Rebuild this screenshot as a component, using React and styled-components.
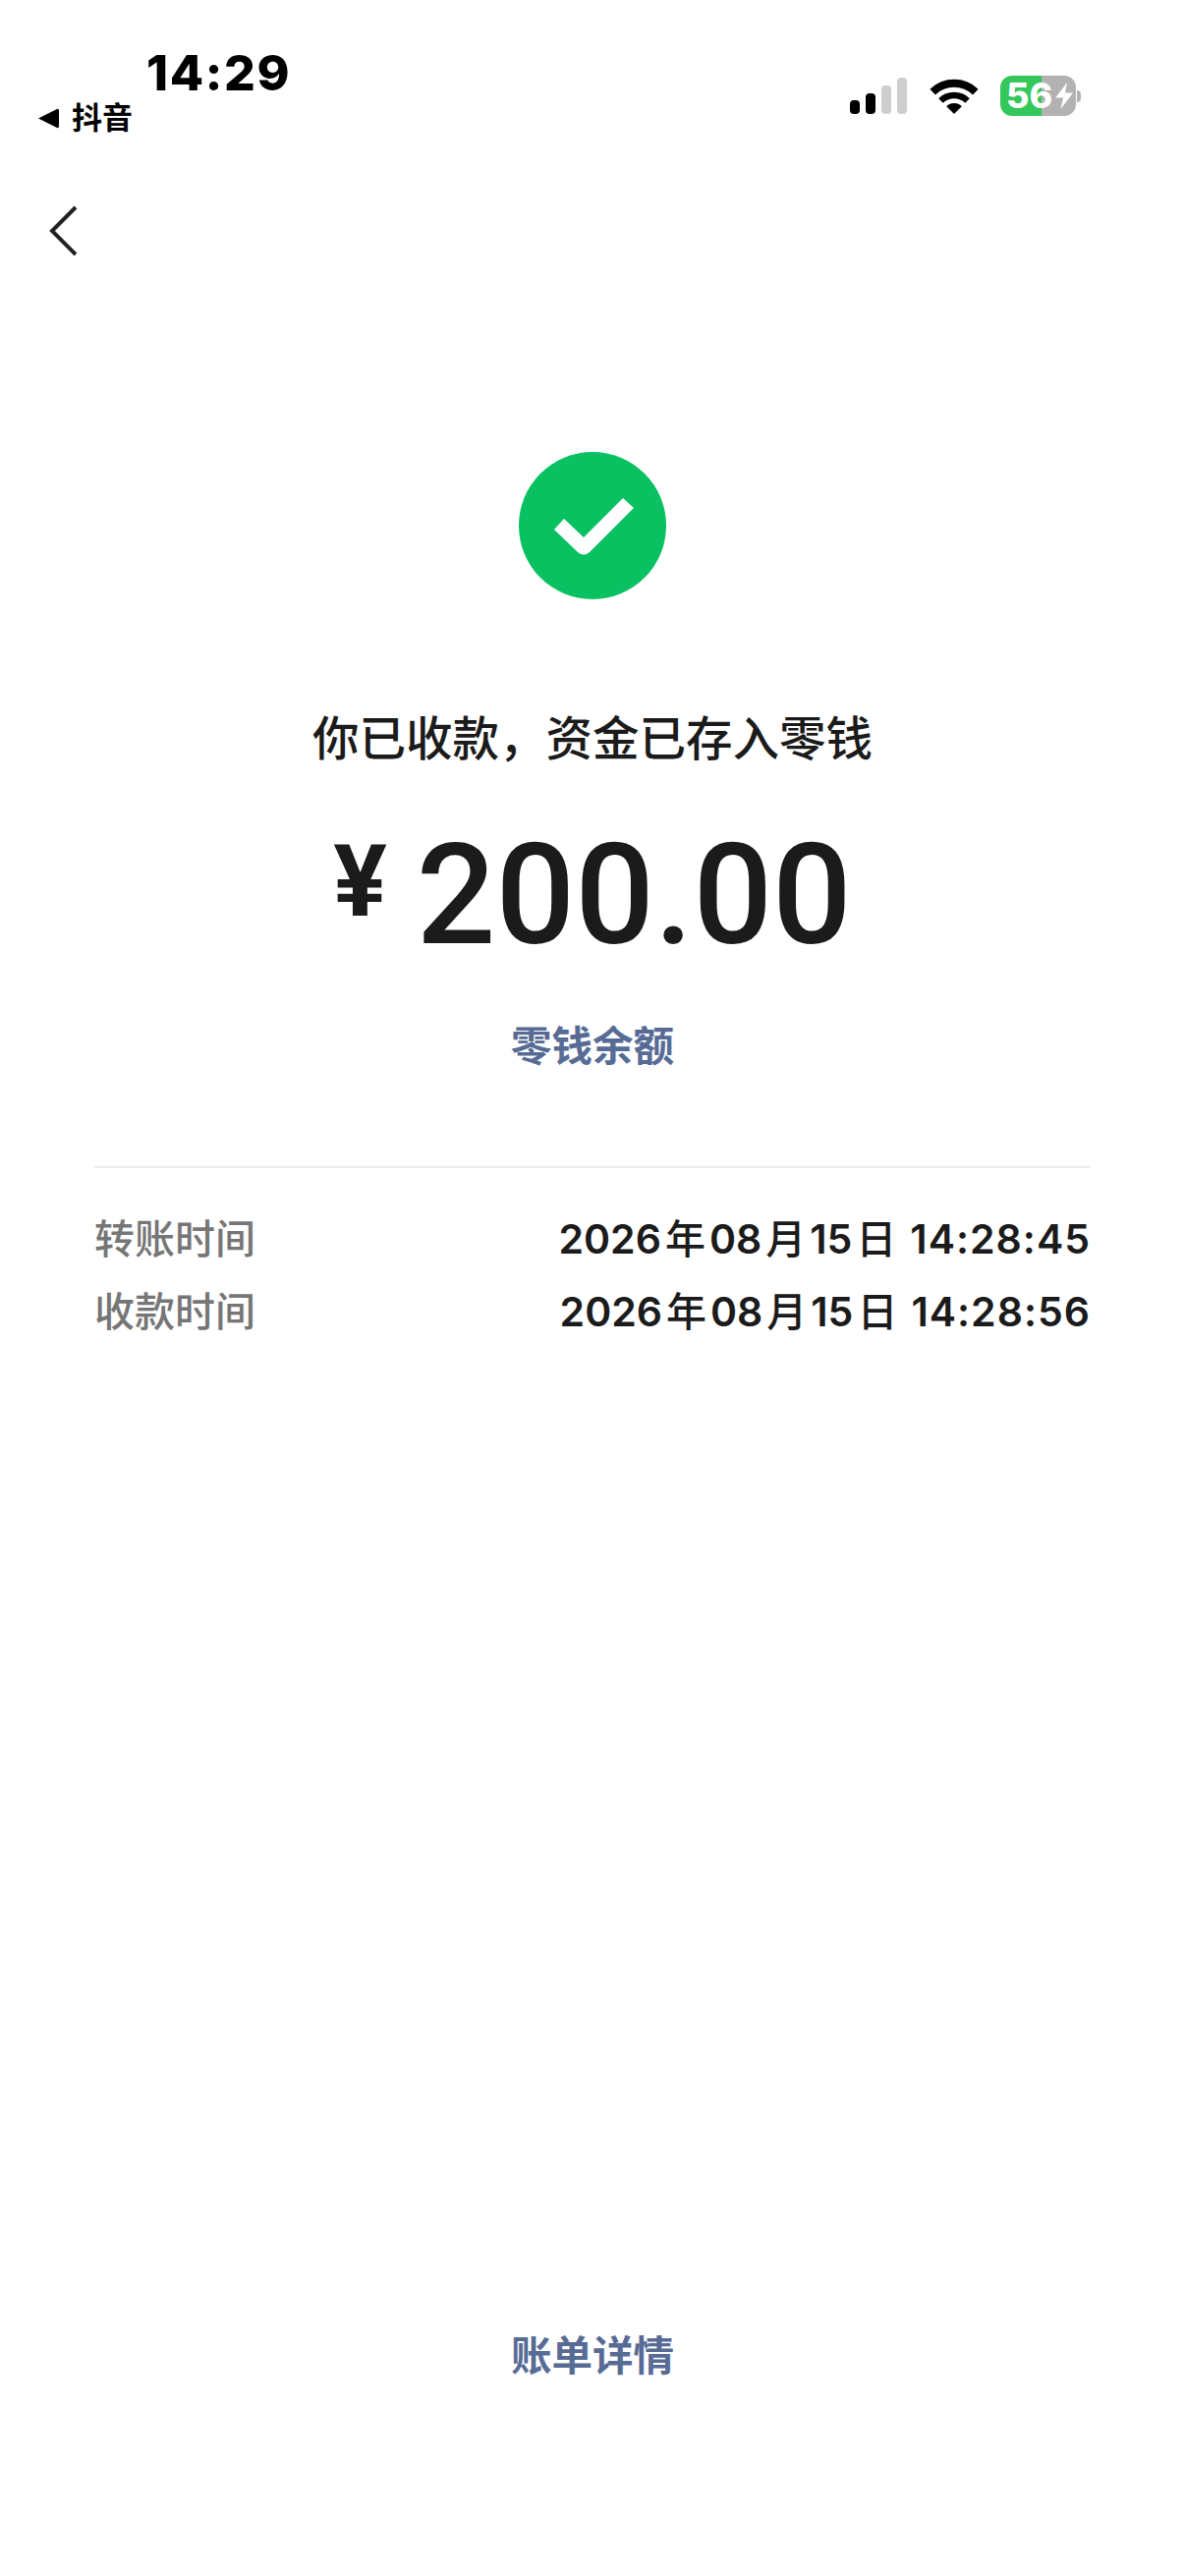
import styled, { createGlobalStyle } from "styled-components";

const GlobalStyle = createGlobalStyle`
  html, body {
    margin: 0;
    padding: 0;
    background: #fff;
  }
`;

const CJK = `Inter, "Noto Sans CJK SC", sans-serif`;

const Page = styled.div`
  display: flex;
  flex-direction: column;
  width: 1206px;
  height: 2622px;
  overflow: hidden;
  background: #fff;
  font-family: ${CJK};
  color: #1b1b1b;
`;

const StatusBar = styled.div`
  display: flex;
  justify-content: space-between;
  height: 150px;
  padding: 46px 111px 0 38px;
  box-sizing: border-box;
`;

const StatusLeft = styled.div`
  display: flex;
  flex-direction: column;
`;

const Time = styled.div`
  margin-left: 111px;
  height: 56px;
  font-size: 50px;
  line-height: 56px;
  font-weight: 800;
  letter-spacing: 1.6px;
  color: #000;
`;

const BackToApp = styled.div`
  display: flex;
  align-items: center;
  gap: 13px;
  height: 36px;
  font-size: 31px;
  line-height: 36px;
  font-weight: 700;
  color: #000;
`;

const StatusRight = styled.div`
  display: flex;
  align-items: center;
  height: 41px;
  margin-top: 31px;
`;

const Signal = styled.div`
  display: flex;
  align-items: flex-end;
  gap: 6px;
  height: 37px;
  margin-right: 23px;
`;

const SignalBar = styled.span`
  width: 10px;
  height: ${(p) => p.$h}px;
  border-radius: 4px;
  background: ${(p) => (p.$on ? "#000" : "#cecece")};
`;

const Battery = styled.div`
  position: relative;
  display: flex;
  align-items: center;
  box-sizing: border-box;
  width: 77px;
  height: 41px;
  margin-left: 22px;
  padding-left: 6px;
  border-radius: 12px;
  background: linear-gradient(90deg, #34c759 0 42px, #b2b2b2 42px 100%);
  color: #fff;
  font-size: 36px;
  line-height: 41px;
  font-weight: 800;
  &::after {
    content: "";
    position: absolute;
    right: -5px;
    top: 15px;
    width: 4px;
    height: 12px;
    border-radius: 0 4px 4px 0;
    background: #b2b2b2;
  }
`;

const Nav = styled.div`
  display: flex;
  align-items: center;
  height: 50px;
  padding: 60px 0 0 50px;
`;

const Main = styled.div`
  display: flex;
  flex-direction: column;
  align-items: center;
  margin-top: 200px;
`;

const Title = styled.div`
  margin-top: 112px;
  height: 60px;
  font-size: 47.5px;
  line-height: 60px;
  font-weight: 500;
  white-space: nowrap;
`;

const Amount = styled.div`
  display: flex;
  align-items: flex-start;
  height: 150px;
  margin-top: 55px;
  font-family: Roboto, sans-serif;
`;

const Currency = styled.span`
  font-size: 102px;
  line-height: 120px;
  font-weight: 700;
  margin-right: 30px;
`;

const Digits = styled.span`
  font-size: 142px;
  line-height: 150px;
  font-weight: 500;
`;

const LinkText = styled.div`
  font-size: 41.5px;
  line-height: 50px;
  font-weight: 600;
  color: #576b95;
`;

const BalanceLink = styled(LinkText)`
  margin-top: 53px;
`;

const Details = styled.div`
  display: flex;
  flex-direction: column;
  margin: 97px 96px 0;
  border-top: 2px solid #ececec;
  padding-top: 47px;
  gap: 24px;
`;

const Row = styled.div`
  display: flex;
  justify-content: space-between;
  height: 50px;
  line-height: 50px;
  font-size: 41px;
`;

const Label = styled.span`
  font-weight: 500;
  color: #767676;
`;

const Value = styled.span`
  display: flex;
  font-weight: 600;
  white-space: nowrap;
`;

const Unit = styled.span`
  margin: 0 4px;
  font-weight: 500;
`;

const Clock = styled.span`
  margin-left: 10px;
  letter-spacing: 1px;
`;

const Footer = styled.div`
  display: flex;
  justify-content: center;
  margin-top: auto;
  padding-bottom: 199px;
`;

const WifiIcon = () => (
  <svg width="50" height="37" viewBox="0 0 50 37">
    <path d="M25 37 17.2 29.2A11 11 0 0 1 32.8 29.2Z" fill="#000" />
    <path d="M11.5 23.5A19.5 19.5 0 0 1 38.5 23.5" fill="none" stroke="#000" strokeWidth="6.5" />
    <path d="M3.2 14.6A31.5 31.5 0 0 1 46.8 14.6" fill="none" stroke="#000" strokeWidth="8" />
  </svg>
);

const BoltIcon = () => (
  <svg width="20" height="27" viewBox="0 0 20 27" style={{ position: "absolute", left: 55, top: 7 }}>
    <path d="M13 0 1 15.5H9L6.5 27 19 10.5H11Z" fill="#fff" />
  </svg>
);

const BackArrow = () => (
  <svg width="30" height="52" viewBox="0 0 30 52">
    <path d="M27 2 3 26 27 50" fill="none" stroke="#222" strokeWidth="4" />
  </svg>
);

const SuccessIcon = () => (
  <svg width="150" height="150" viewBox="0 0 150 150">
    <circle cx="75" cy="75" r="75" fill="#09c160" />
    <path
      d="M36 79 46 68 66 87 106 47 117 57 72 102Q66 107 60 102Z"
      fill="#fff"
    />
  </svg>
);

const TriangleIcon = () => (
  <svg width="22" height="21" viewBox="0 0 22 21">
    <path d="M1 10.5 20 1Q22 0 22 3V18Q22 21 20 20Z" fill="#000" />
  </svg>
);

const times = [
  { label: "转账时间", value: "14:28:45" },
  { label: "收款时间", value: "14:28:56" },
];

export default function App() {
  return (
    <Page>
      <GlobalStyle />
      <StatusBar>
        <StatusLeft>
          <Time>14:29</Time>
          <BackToApp>
            <TriangleIcon />
            抖音
          </BackToApp>
        </StatusLeft>
        <StatusRight>
          <Signal>
            <SignalBar $h={14} $on />
            <SignalBar $h={21} $on />
            <SignalBar $h={29} />
            <SignalBar $h={37} />
          </Signal>
          <WifiIcon />
          <Battery>
            56
            <BoltIcon />
          </Battery>
        </StatusRight>
      </StatusBar>
      <Nav>
        <BackArrow />
      </Nav>
      <Main>
        <SuccessIcon />
        <Title>你已收款，资金已存入零钱</Title>
        <Amount>
          <Currency>¥</Currency>
          <Digits>200.00</Digits>
        </Amount>
        <BalanceLink>零钱余额</BalanceLink>
      </Main>
      <Details>
        {times.map((t) => (
          <Row key={t.label}>
            <Label>{t.label}</Label>
            <Value>
              2026<Unit>年</Unit>08<Unit>月</Unit>15<Unit>日</Unit>
              <Clock>{t.value}</Clock>
            </Value>
          </Row>
        ))}
      </Details>
      <Footer>
        <LinkText>账单详情</LinkText>
      </Footer>
    </Page>
  );
}
